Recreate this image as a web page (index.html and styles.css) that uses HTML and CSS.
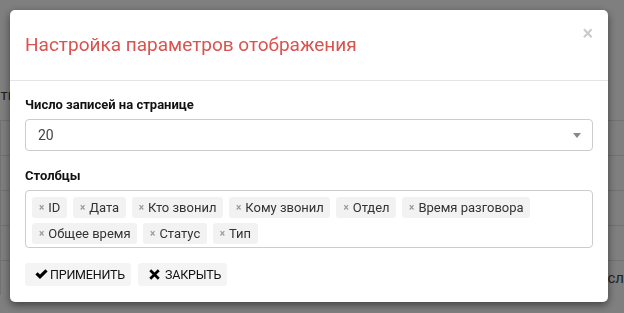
FILE: index.html
```html
<!DOCTYPE html>
<html lang="ru">
<head>
  <meta charset="UTF-8">
  <title>Настройка параметров отображения</title>
  <link rel="stylesheet" href="styles.css">
</head>
<body>

  <div class="page">
    <table class="grid">
      <tr class="row-head"><td>ть</td><td></td><td></td><td></td></tr>
      <tr><td></td><td></td><td></td><td></td></tr>
      <tr><td></td><td></td><td></td><td></td></tr>
      <tr><td></td><td></td><td></td><td></td></tr>
      <tr><td></td><td></td><td></td><td></td></tr>
      <tr><td></td><td></td><td></td><td class="right">Числ</td></tr>
    </table>
  </div>

  <div class="overlay">
    <div class="modal">
      <div class="modal-header">
        <h4 class="modal-title">Настройка параметров отображения</h4>
        <span class="close">×</span>
      </div>
      <div class="modal-body">
        <label class="field-label">Число записей на странице</label>
        <div class="select">
          <span>20</span>
          <span class="caret"></span>
        </div>

        <label class="field-label">Столбцы</label>
        <div class="tags">
          <span class="tag"><i>×</i>ID</span>
          <span class="tag"><i>×</i>Дата</span>
          <span class="tag"><i>×</i>Кто звонил</span>
          <span class="tag"><i>×</i>Кому звонил</span>
          <span class="tag"><i>×</i>Отдел</span>
          <span class="tag"><i>×</i>Время разговора</span>
          <span class="tag"><i>×</i>Общее время</span>
          <span class="tag"><i>×</i>Статус</span>
          <span class="tag"><i>×</i>Тип</span>
        </div>

        <div class="actions">
          <button class="btn">
            <svg width="13" height="11" viewBox="0 0 13 11"><path d="M0.4 5.4 L2.6 3.2 L5 5.6 L10.4 0.2 L12.6 2.4 L5 10 Z" fill="#000"/></svg>
            ПРИМЕНИТЬ
          </button>
          <button class="btn btn-close">
            <svg width="11" height="11" viewBox="0 0 11 11"><path d="M2.2 0.3 L5.5 3.6 L8.8 0.3 L10.7 2.2 L7.4 5.5 L10.7 8.8 L8.8 10.7 L5.5 7.4 L2.2 10.7 L0.3 8.8 L3.6 5.5 L0.3 2.2 Z" fill="#000"/></svg>
            ЗАКРЫТЬ
          </button>
        </div>
      </div>
    </div>
  </div>

</body>
</html>
```

FILE: styles.css
```css
html, body {
  height: 313px;
  overflow: hidden;
}
body {
  margin: 0;
  font-family: Roboto, "Liberation Sans", Arial, sans-serif;
  font-size: 13px;
  color: #333;
  background: #fff;
}

.page {
  padding-top: 70px;
}
.grid {
  width: 100%;
  border-collapse: collapse;
  color: #444;
}
.grid td {
  height: 34px;
  border-top: 1px solid #e4e4e4;
  border-left: 1px solid #e4e4e4;
  padding: 0;
  font-size: 15px;
}
.grid td:nth-child(1) { width: 150px; }
.grid td:nth-child(2) { width: 192px; }
.grid td:nth-child(3) { width: 220px; }
.grid .row-head td {
  height: 50px;
  border-top: 0;
  border-left: 0;
}
.grid .right {
  text-align: right;
}

.overlay {
  position: fixed;
  inset: 0;
  background: rgba(0, 0, 0, 0.5);
  padding: 10px 16px 0 10px;
}

.modal {
  width: 598px;
  background: #fff;
  border-radius: 5px;
  box-shadow: 0 3px 9px rgba(0, 0, 0, 0.5);
}

.modal-header {
  display: flex;
  justify-content: space-between;
  align-items: flex-start;
  padding: 20px 15px;
  border-bottom: 1px solid #e5e5e5;
}
.modal-title {
  margin: 0;
  font-size: 19px;
  font-weight: 400;
  line-height: 30px;
  color: #d9534f;
}
.close {
  font-size: 20px;
  font-weight: 700;
  line-height: 1;
  color: #000;
  opacity: 0.2;
  margin-top: -7px;
}

.modal-body {
  padding: 15px 15px 16px;
}

.field-label {
  display: block;
  font-weight: 700;
  color: #111;
  line-height: 18px;
  margin-bottom: 5px;
}

.select {
  display: flex;
  justify-content: space-between;
  align-items: center;
  height: 32px;
  box-sizing: border-box;
  padding: 0 10px 0 12px;
  border: 1px solid #ccc;
  border-radius: 4px;
  margin-bottom: 16px;
  color: #444;
  font-size: 14px;
}
.caret {
  width: 0;
  height: 0;
  border-left: 4px solid transparent;
  border-right: 4px solid transparent;
  border-top: 5px solid #888;
  margin-right: 1px;
}

.tags {
  display: flex;
  flex-wrap: wrap;
  align-content: flex-start;
  gap: 5px 6px;
  height: 58px;
  box-sizing: border-box;
  padding: 6px 6px;
  border: 1px solid #ccc;
  border-radius: 4px;
}
.tag {
  display: flex;
  align-items: center;
  height: 21px;
  padding: 0 6.5px 0 7px;
  background: #f2f2f2;
  border-radius: 3px;
  color: #333;
  font-size: 13px;
}
.tag i {
  font-style: normal;
  font-weight: 700;
  font-size: 10px;
  color: #999;
  margin-right: 4px;
}

.actions {
  display: flex;
  gap: 7px;
  margin-top: 15px;
}
.btn {
  display: flex;
  align-items: center;
  gap: 2px;
  height: 23px;
  padding: 0 6px 0 10px;
  border: 0;
  border-radius: 3px;
  background: #f4f4f4;
  font-family: inherit;
  font-size: 12.5px;
  color: #111;
  letter-spacing: -0.2px;
}
.btn-close {
  padding-left: 11px;
  gap: 5px;
}
```
